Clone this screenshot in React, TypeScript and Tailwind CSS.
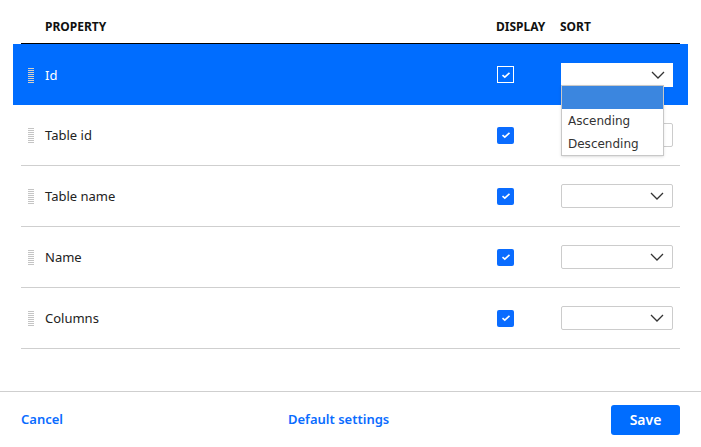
const rows = ['Id', 'Table id', 'Table name', 'Name', 'Columns']

function Handle({ active }: { active: boolean }) {
  return (
    <div className="flex w-[6px] flex-col gap-[1px]">
      {Array.from({ length: 8 }).map((_, i) => (
        <div key={i} className={`h-[1px] w-full ${active ? 'bg-[#d6cfc4]' : 'bg-[#c4c4c4]'}`} />
      ))}
    </div>
  )
}

function Check({ active }: { active: boolean }) {
  return (
    <div
      className={`flex h-[17px] w-[17px] items-center justify-center ${
        active ? 'border border-white' : 'rounded-[2px] bg-[#0a6cff]'
      }`}
    >
      <svg width="10" height="8" viewBox="0 0 10 8" fill="none">
        <path d="M1.5 4.2 L3.8 6.2 L8.5 1.8" stroke="white" strokeWidth="1.6" />
      </svg>
    </div>
  )
}

function Chevron() {
  return (
    <svg width="14" height="8" viewBox="0 0 14 8" fill="none">
      <path d="M1 1 L7 7 L13 1" stroke="#333" strokeWidth="1.3" />
    </svg>
  )
}

function App() {
  return (
    <div className="flex h-[447px] w-[701px] flex-col bg-white font-['Noto_Sans',sans-serif] text-[13px] text-[#222]">
      <div className="flex-1">
        <div className="mx-[21px] flex h-[44px] items-end border-b border-black pb-[7px] text-[12px] font-bold text-[#111]">
          <span className="pl-[24px]">PROPERTY</span>
          <span className="ml-auto w-[64px]">DISPLAY</span>
          <span className="w-[120px]">SORT</span>
        </div>
        {rows.map((name, i) => {
          const active = i === 0
          return (
            <div
              key={name}
              className={active ? 'relative mx-[13px] bg-[#006dff] px-[8px]' : 'mx-[21px] border-b border-[#cfcfcf]'}
            >
              <div className={`flex items-center ${active ? 'h-[61px] text-white' : 'h-[60px]'}`}>
                <div className="pl-[7px] pr-[11px] pt-[1px]">
                  <Handle active={active} />
                </div>
                <span className="pt-[2px]">{name}</span>
                <div className="ml-auto w-[64px] pl-[1px]">
                  <Check active={active} />
                </div>
                <div className="w-[120px] pl-[1px]">
                  <div
                    className={`flex h-[24px] w-[112px] items-center justify-end bg-white pr-[8px] ${
                      active ? '' : 'rounded-[2px] border border-[#cccccc]'
                    }`}
                  >
                    <Chevron />
                  </div>
                </div>
              </div>
              {active && (
                <div className="absolute left-[548px] top-[41px] z-10 w-[103px] border border-[#c8c8c8] bg-white font-['DejaVu_Sans',sans-serif] text-[12px] text-[#333] shadow-sm">
                  <div className="h-[23px] bg-[#3b86df]" />
                  <div className="flex h-[23px] items-center px-[6px]">Ascending</div>
                  <div className="flex h-[23px] items-center px-[6px]">Descending</div>
                </div>
              )}
            </div>
          )
        })}
      </div>
      <div className="flex h-[56px] items-center border-t border-[#cfcfcf] px-[21px] text-[13px] font-semibold text-[#0a6cff]">
        <span className="w-[267px]">Cancel</span>
        <span>Default settings</span>
        <button className="ml-auto h-[30px] w-[69px] rounded-[3px] bg-[#006dff] text-[14px] font-semibold text-white">
          Save
        </button>
      </div>
    </div>
  )
}

export default App
